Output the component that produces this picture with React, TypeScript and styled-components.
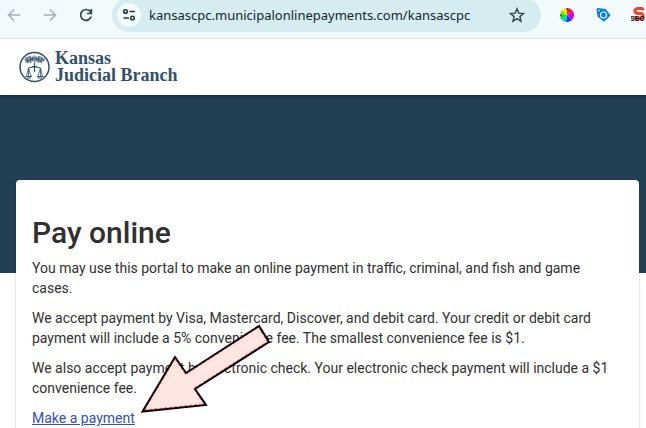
import React from "react";
import styled, { createGlobalStyle } from "styled-components";

const GlobalStyle = createGlobalStyle`
  *, *::before, *::after { box-sizing: border-box; }
  body { margin: 0; background: #fff; color: #303030; font: 14px/20px Roboto, sans-serif; }
  button { padding: 0; border: 0; background: none; color: inherit; }
  svg { display: block; }
`;

const Page = styled.div`
  height: 100vh;
  overflow: hidden;
`;

const Toolbar = styled.nav`
  display: flex;
  align-items: flex-start;
  height: 39px;
  background: #f2fafc;
  border-bottom: 1px solid #d3e3e8;
`;

const Navigation = styled.div`
  display: flex;
  flex: none;
  gap: 20px;
  padding: 7px 18px 0 6px;
`;

const IconButton = styled.button<{ $muted?: boolean }>`
  display: grid;
  place-items: center;
  flex: none;
  width: 16px;
  height: 16px;
  color: ${(p) => (p.$muted ? "#a6b0b4" : "#31444d")};
`;

const AddressBar = styled.div`
  display: flex;
  align-items: center;
  flex: 1;
  min-width: 0;
  height: 34px;
  margin-top: -2px;
  padding: 0 16px 0 5px;
  gap: 8px;
  border-radius: 17px;
  background: #d5ecf0;
`;

const SiteButton = styled.button`
  display: grid;
  place-items: center;
  flex: none;
  width: 24px;
  height: 24px;
  border-radius: 50%;
  background: #f4fbfc;
`;

const Address = styled.input`
  flex: 1;
  min-width: 0;
  height: 24px;
  padding: 0;
  border: 0;
  outline: 0;
  background: transparent;
  color: #17282e;
  font: 13px/20px "Noto Sans", "Open Sans", sans-serif;
`;

const Extensions = styled.div`
  display: flex;
  flex: none;
  gap: 20px;
  padding: 7px 0 0 18px;
  width: 105px;
  overflow: hidden;
`;

const Header = styled.header`
  display: flex;
  align-items: center;
  height: 56px;
  padding: 0 19px;
  background: #fff;
`;

const Brand = styled.a`
  display: flex;
  align-items: center;
  gap: 5px;
  color: #315069;
  text-decoration: none;
  font: bold 18px/17px "Liberation Serif", serif;
`;

const BrandName = styled.span`
  display: flex;
  flex-direction: column;
`;

const Hero = styled.div`
  height: 178px;
  background: linear-gradient(#183044, #233f54 5px);
`;

const Card = styled.main`
  margin: -93px 7px 0 16px;
  padding: 35px 16px 24px;
  border-radius: 4px;
  background: #fff;
  box-shadow: 0 0 2px rgba(0, 0, 0, 0.3);
`;

const Title = styled.h1`
  margin: 0 0 7px;
  font-size: 30px;
  line-height: 36px;
  font-weight: 500;
`;

const Paragraph = styled.p`
  margin: 0 0 10px;
`;

const Action = styled.div`
  position: relative;
`;

const PaymentLink = styled.a`
  color: #3250b5;
  text-decoration: underline;
`;

const Pointer = styled.svg`
  position: absolute;
  left: 106px;
  top: -86px;
  pointer-events: none;
`;

const wheel = ["#ff1616", "#ff00b8", "#d900ff", "#1631ff", "#00c9ee", "#00df45", "#7fe800", "#ffe600"];

function ColorWheel() {
  const point = (i: number) => {
    const a = ((i * 45 - 90) * Math.PI) / 180;
    return `${8 + 7 * Math.cos(a)} ${8 + 7 * Math.sin(a)}`;
  };
  return (
    <svg width="16" height="16" viewBox="0 0 16 16">
      {wheel.map((c, i) => (
        <path key={c} d={`M8 8L${point(i)}A7 7 0 0 1 ${point(i + 1)}Z`} fill={c} />
      ))}
      <path d="M8 1v2M8 13v2M1 8h2M13 8h2" stroke="#334" strokeWidth="1" />
    </svg>
  );
}

function Seal() {
  return (
    <svg width="31" height="32" viewBox="0 0 31 32" fill="none" stroke="#315069" aria-hidden="true">
      <circle cx="15.500" cy="16" r="14.500" strokeWidth="1.500" />
      <path d="M6 7l4-2 3 1 2-2 3 2 3-1 5 3-1 3-3-2-1 3-3-2-2 2-3-2-3 2-1-2-3 2z" fill="#92a3b1" stroke="none" />
      <path d="M5.500 8l3 2M8 6l1 6M11 5l1 7M8 12l3-4M14 6l-1 4M17 6l1 4M20 5l-1 7M23 6l-1 6M25.500 8l-3 2M23 12l-3-4M12 8h7" strokeWidth=".9" />
      <path d="M15.500 12v9M9.500 17l4-1h4l4 1M13 15.500h5" strokeWidth="1.200" />
      <path d="M9.500 17v9M21.500 17v9M9.500 17L7.500 25M9.500 17l2.500 8M21.500 17L19 25M21.500 17l2 8" strokeWidth=".8" />
      <path d="M6.500 25.500h6.500M18 25.500h6.500M8 27h4M19 27h4" strokeWidth="1.100" />
    </svg>
  );
}

export default function App() {
  return (
    <Page>
      <GlobalStyle />
      <Toolbar aria-label="Browser">
        <Navigation>
          <IconButton $muted aria-label="Back">
            <svg width="16" height="16" fill="none" stroke="currentColor" strokeWidth="1.6"><path d="M14 8H3M8 2.500L2.500 8 8 13.500" /></svg>
          </IconButton>
          <IconButton $muted aria-label="Forward">
            <svg width="16" height="16" fill="none" stroke="currentColor" strokeWidth="1.6"><path d="M2 8h11M8 2.500L13.500 8 8 13.500" /></svg>
          </IconButton>
          <IconButton aria-label="Reload">
            <svg width="16" height="16" fill="none" stroke="currentColor" strokeWidth="1.700"><path d="M13.200 9.500A5.400 5.400 0 1 1 12 4.200L13.200 6M13.300 2v4.500H9" /></svg>
          </IconButton>
        </Navigation>
        <AddressBar>
          <SiteButton aria-label="Site information">
            <svg width="14" height="14" fill="none" stroke="#26383f" strokeWidth="1.6"><circle cx="3.500" cy="3.500" r="1.800" /><path d="M7.500 3.500H13M1.500 10H7" /><circle cx="10.500" cy="10" r="1.800" /></svg>
          </SiteButton>
          <Address aria-label="Address" defaultValue="kansascpc.municipalonlinepayments.com/kansascpc" />
          <IconButton aria-label="Bookmark this page">
            <svg width="16" height="16" fill="none" stroke="currentColor" strokeWidth="1.4"><path d="M8 1.800l1.800 4.300 4.700.4-3.600 3.100 1.100 4.600L8 11.700l-4 2.500 1.100-4.600L1.500 6.500l4.700-.4z" /></svg>
          </IconButton>
        </AddressBar>
        <Extensions>
          <IconButton aria-label="Color picker"><ColorWheel /></IconButton>
          <IconButton aria-label="Tag assistant">
            <svg width="16" height="16" viewBox="0 0 16 16"><path d="M1.500 2.500Q1.500 1 3 1L10.500 2L15 7.500q.6 1-.2 1.800L10 14q-1 .8-2 0L2.500 9.500z" fill="#087eea" /><circle cx="8.500" cy="8" r="3" fill="none" stroke="#fff" strokeWidth="1.100" /><circle cx="4" cy="3.500" r=".8" fill="#fff" /></svg>
          </IconButton>
          <IconButton aria-label="SEO extension">
            <svg width="16" height="16" viewBox="0 0 16 16"><path d="M12.500 3L11 1.500H6L4 3v2L6 6.500h4.500L12 8v2L10.500 11.500H5.500L3 10" fill="none" stroke="#f04432" strokeWidth="3" /><text x="-1" y="14" fill="#111" fontFamily="Liberation Sans, sans-serif" fontSize="7" fontWeight="bold">SEO</text></svg>
          </IconButton>
        </Extensions>
      </Toolbar>
      <Header>
        <Brand href="#home"><Seal /><BrandName><span>Kansas</span><span>Judicial Branch</span></BrandName></Brand>
      </Header>
      <Hero />
      <Card>
        <Title>Pay online</Title>
        <Paragraph>You may use this portal to make an online payment in traffic, criminal, and fish and game cases.</Paragraph>
        <Paragraph>We accept payment by Visa, Mastercard, Discover, and debit card. Your credit or debit card payment will include a 5% convenience fee. The smallest convenience fee is $1.</Paragraph>
        <Paragraph>We also accept payment by electronic check. Your electronic check payment will include a $1 convenience fee.</Paragraph>
        <Action>
          <PaymentLink href="#payment">Make a payment</PaymentLink>
          <Pointer width="136" height="94" viewBox="0 0 136 94" aria-hidden="true">
            <path d="M4.500 89.500L37 35l11 16L121 4l10 16L57 67l11 16z" fill="#ffe6e2" stroke="#080000" strokeWidth="2" />
            <path d="M6.500 88L37 37l10.500 15.500L120.500 5.500l9 14L55.500 66.500l10.500 15.500z" fill="none" stroke="#c00000" strokeWidth=".6" strokeDasharray="3 2" />
          </Pointer>
        </Action>
      </Card>
    </Page>
  );
}
